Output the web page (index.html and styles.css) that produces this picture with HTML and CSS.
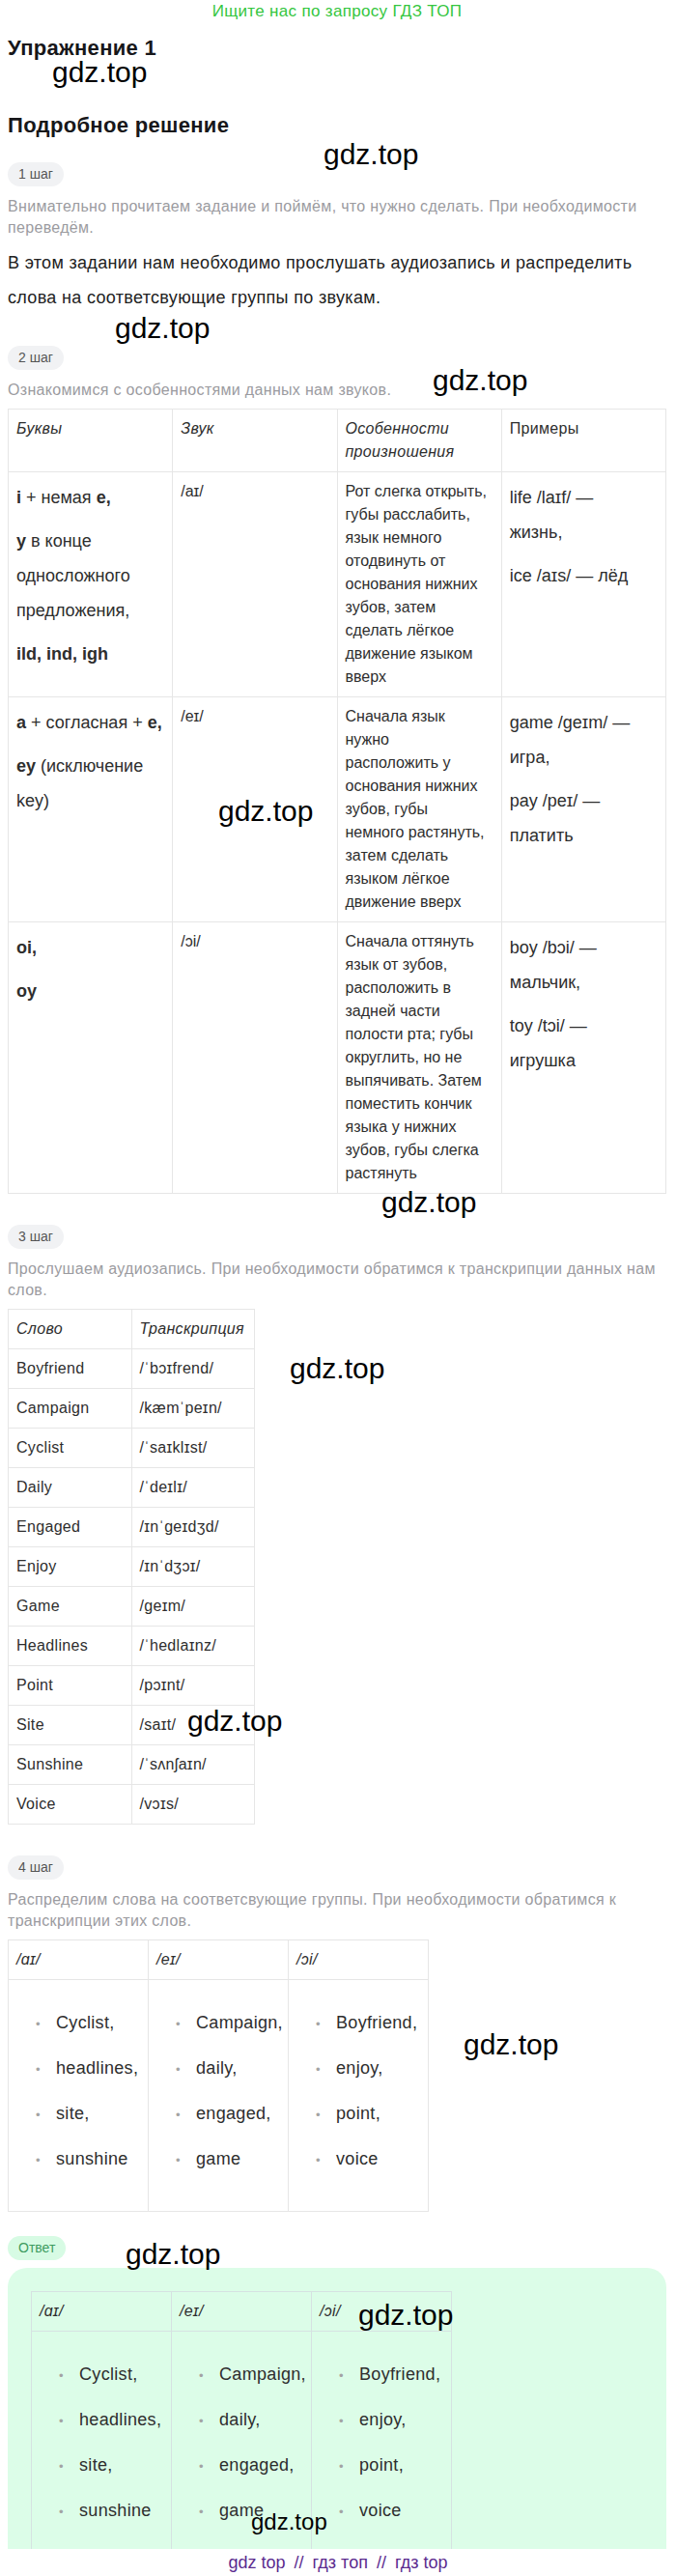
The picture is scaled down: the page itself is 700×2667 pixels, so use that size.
FILE: index.html
```html
<!DOCTYPE html>
<html lang="ru">
<head>
<meta charset="utf-8">
<title>Упражнение 1</title>
<link rel="stylesheet" href="styles.css">
</head>
<body>
<div class="page">
  <p class="promo">Ищите нас по запросу ГДЗ ТОП</p>
  <h1 class="title">Упражнение 1</h1>
  <h2 class="subtitle">Подробное решение</h2>

  <section class="step step-first">
    <span class="badge">1 шаг</span>
    <p class="note">Внимательно прочитаем задание и поймём, что нужно сделать. При необходимости переведём.</p>
    <p class="lead">В этом задании нам необходимо прослушать аудиозапись и распределить слова на соответсвующие группы по звукам.</p>
  </section>

  <section class="step">
    <span class="badge">2 шаг</span>
    <p class="note">Ознакомимся с особенностями данных нам звуков.</p>
    <table class="grid sounds">
      <thead>
        <tr><th>Буквы</th><th>Звук</th><th>Особенности произношения</th><th class="plain">Примеры</th></tr>
      </thead>
      <tbody>
        <tr>
          <td class="c-letters"><p><b>i</b> + немая <b>e,</b></p><p><b>y</b> в конце односложного предложения,</p><p><b>ild, ind, igh</b></p></td>
          <td>/aɪ/</td>
          <td class="c-desc">Рот слегка открыть, губы расслабить, язык немного отодвинуть от основания нижних зубов, затем сделать лёгкое движение языком вверх</td>
          <td class="c-examples"><p>life /laɪf/ — жизнь,</p><p>ice /aɪs/ — лёд</p></td>
        </tr>
        <tr>
          <td class="c-letters"><p><b>a</b> + согласная + <b>e,</b></p><p><b>ey</b> (исключение key)</p></td>
          <td>/eɪ/</td>
          <td class="c-desc">Сначала язык нужно<br>расположить у основания нижних зубов, губы немного растянуть, затем сделать языком лёгкое движение вверх</td>
          <td class="c-examples"><p>game /geɪm/ — игра,</p><p>pay /peɪ/ — платить</p></td>
        </tr>
        <tr>
          <td class="c-letters"><p><b>oi,</b></p><p><b>oy</b></p></td>
          <td>/ɔi/</td>
          <td class="c-desc">Сначала оттянуть язык от зубов, расположить в задней части полости рта; губы округлить, но не выпячивать. Затем поместить кончик языка у нижних зубов, губы слегка растянуть</td>
          <td class="c-examples"><p>boy /bɔi/ — мальчик,</p><p>toy /tɔi/ — игрушка</p></td>
        </tr>
      </tbody>
    </table>
  </section>

  <section class="step">
    <span class="badge">3 шаг</span>
    <p class="note">Прослушаем аудиозапись. При необходимости обратимся к транскрипции данных нам слов.</p>
    <table class="grid words">
      <thead>
        <tr><th>Слово</th><th>Транскрипция</th></tr>
      </thead>
      <tbody>
        <tr><td>Boyfriend</td><td>/ˈbɔɪfrend/</td></tr>
        <tr><td>Campaign</td><td>/kæmˈpeɪn/</td></tr>
        <tr><td>Cyclist</td><td>/ˈsaɪklɪst/</td></tr>
        <tr><td>Daily</td><td>/ˈdeɪlɪ/</td></tr>
        <tr><td>Engaged</td><td>/ɪnˈgeɪdʒd/</td></tr>
        <tr><td>Enjoy</td><td>/ɪnˈdʒɔɪ/</td></tr>
        <tr><td>Game</td><td>/geɪm/</td></tr>
        <tr><td>Headlines</td><td>/ˈhedlaɪnz/</td></tr>
        <tr><td>Point</td><td>/pɔɪnt/</td></tr>
        <tr><td>Site</td><td>/saɪt/</td></tr>
        <tr><td>Sunshine</td><td>/ˈsʌnʃaɪn/</td></tr>
        <tr><td>Voice</td><td>/vɔɪs/</td></tr>
      </tbody>
    </table>
  </section>

  <section class="step">
    <span class="badge">4 шаг</span>
    <p class="note">Распределим слова на соответсвующие группы. При необходимости обратимся к транскрипции этих слов.</p>
    <table class="grid groups">
      <thead>
        <tr><th>/ɑɪ/</th><th>/eɪ/</th><th>/ɔi/</th></tr>
      </thead>
      <tbody>
        <tr>
          <td><ul class="bullets"><li>Cyclist,</li><li>headlines,</li><li>site,</li><li>sunshine</li></ul></td>
          <td><ul class="bullets"><li>Campaign,</li><li>daily,</li><li>engaged,</li><li>game</li></ul></td>
          <td><ul class="bullets"><li>Boyfriend,</li><li>enjoy,</li><li>point,</li><li>voice</li></ul></td>
        </tr>
      </tbody>
    </table>
  </section>

  <section class="step step-answer">
    <span class="badge badge-answer">Ответ</span>
    <div class="answer-box">
      <table class="grid groups answer-grid">
        <thead>
          <tr><th>/ɑɪ/</th><th>/eɪ/</th><th>/ɔi/</th></tr>
        </thead>
        <tbody>
          <tr>
            <td><ul class="bullets"><li>Cyclist,</li><li>headlines,</li><li>site,</li><li>sunshine</li></ul></td>
            <td><ul class="bullets"><li>Campaign,</li><li>daily,</li><li>engaged,</li><li>game</li></ul></td>
            <td><ul class="bullets"><li>Boyfriend,</li><li>enjoy,</li><li>point,</li><li>voice</li></ul></td>
          </tr>
        </tbody>
      </table>
    </div>
  </section>

  <span class="wm wm1">gdz.top</span>
  <span class="wm wm2">gdz.top</span>
  <span class="wm wm3">gdz.top</span>
  <span class="wm wm4">gdz.top</span>
  <span class="wm wm5">gdz.top</span>
  <span class="wm wm6">gdz.top</span>
  <span class="wm wm7">gdz.top</span>
  <span class="wm wm8">gdz.top</span>
  <span class="wm wm9">gdz.top</span>
  <span class="wm wm10">gdz.top</span>
  <span class="wm wm11">gdz.top</span>
  <span class="wm wm12">gdz.top</span>
</div>
<footer class="footer"><span>gdz top</span><span class="sep">//</span><span>гдз топ</span><span class="sep">//</span><span>гдз top</span></footer>
</body>
</html>
```

FILE: styles.css
```css
* {
  box-sizing: border-box;
}

html,
body {
  margin: 0;
  padding: 0;
}

body {
  font-family: "Liberation Sans", Arial, sans-serif;
  letter-spacing: 0.02em;
  color: #2a2a2a;
  background: #ffffff;
}

.page {
  position: relative;
  padding: 0 10px 40px 8px;
}

.promo {
  margin: 0;
  text-align: center;
  color: #35c640;
  font-size: 17px;
  line-height: 24px;
}

.title,
.subtitle {
  margin: 13px 0 0;
  font-size: 22px;
  line-height: 26px;
  font-weight: 700;
  color: #17171a;
}

.subtitle {
  margin-top: 54px;
}

.step {
  display: flex;
  flex-direction: column;
  align-items: flex-start;
  margin-top: 32px;
}

.step-first {
  margin-top: 25px;
}

.step-answer {
  margin-top: 25px;
  align-items: stretch;
}

.badge {
  align-self: flex-start;
  height: 25px;
  line-height: 25px;
  padding: 0 11px;
  border-radius: 13px;
  background: #f1f2f4;
  color: #555555;
  font-size: 14px;
  letter-spacing: 0;
}

.badge-answer {
  background: #d7fbe4;
  color: #3d9b5f;
}

.note {
  margin: 10px 0 0;
  font-size: 16px;
  line-height: 22px;
  color: #9b9b9f;
}

.lead {
  margin: 7px 0 0;
  font-size: 18px;
  line-height: 36px;
  color: #222222;
}

/* tables */
.grid {
  margin-top: 8px;
  border-collapse: collapse;
  table-layout: fixed;
  color: #2e2e2e;
}

.grid th,
.grid td {
  border: 1px solid #e6e6e6;
  padding: 8px;
  text-align: left;
  vertical-align: top;
  font-size: 16px;
  line-height: 24px;
  font-weight: 400;
}

.grid th {
  font-style: italic;
}

.grid th.plain {
  font-style: normal;
}

.grid p {
  margin: 0;
}

.grid p + p {
  margin-top: 9px;
}

.sounds {
  width: 682px;
}

.sounds td {
  letter-spacing: 0;
}

.sounds .c-letters,
.sounds .c-examples {
  font-size: 18px;
  line-height: 36px;
}

.sounds .c-desc {
  padding-right: 13px;
}

.sounds .c-examples {
  padding-right: 16px;
}

.words {
  width: 256px;
}

.groups {
  width: 436px;
}

.bullets {
  list-style: none;
  margin: 18px 0 26px;
  padding: 0 0 0 20px;
}

.bullets li {
  margin: 9px 0;
  font-size: 18px;
  line-height: 36px;
  white-space: nowrap;
}

.bullets li::before {
  content: "•";
  display: inline-block;
  width: 21px;
  color: #a3a3a3;
  font-size: 13px;
}

/* answer */
.answer-box {
  margin-top: 8px;
  padding: 24px;
  background: #dcfde8;
  border-radius: 20px;
}

.answer-grid {
  margin-top: 0;
}

.answer-grid th,
.answer-grid td {
  border-color: #d6e2e2;
}

/* watermarks */
.wm {
  position: absolute;
  font-family: "Liberation Sans", Arial, sans-serif;
  font-size: 30px;
  line-height: 30px;
  letter-spacing: 0;
  color: #000000;
  white-space: nowrap;
}

.wm1 { left: 54px; top: 60px; }
.wm2 { left: 335px; top: 145px; }
.wm3 { left: 119px; top: 325px; }
.wm4 { left: 448px; top: 379px; }
.wm5 { left: 226px; top: 825px; }
.wm6 { left: 395px; top: 1230px; }
.wm7 { left: 300px; top: 1402px; }
.wm8 { left: 194px; top: 1767px; }
.wm9 { left: 480px; top: 2102px; }
.wm10 { left: 130px; top: 2319px; }
.wm11 { left: 371px; top: 2382px; }
.wm12 { left: 260px; top: 2599px; font-size: 24px; line-height: 24px; }

/* footer */
.footer {
  position: fixed;
  left: 0;
  right: 0;
  bottom: 0;
  height: 28px;
  display: flex;
  justify-content: center;
  align-items: center;
  background: #ffffff;
  color: #5b2b8f;
  font-size: 18px;
  line-height: 28px;
  letter-spacing: 0;
  white-space: nowrap;
}

.footer .sep {
  margin: 0 9px;
}
```
